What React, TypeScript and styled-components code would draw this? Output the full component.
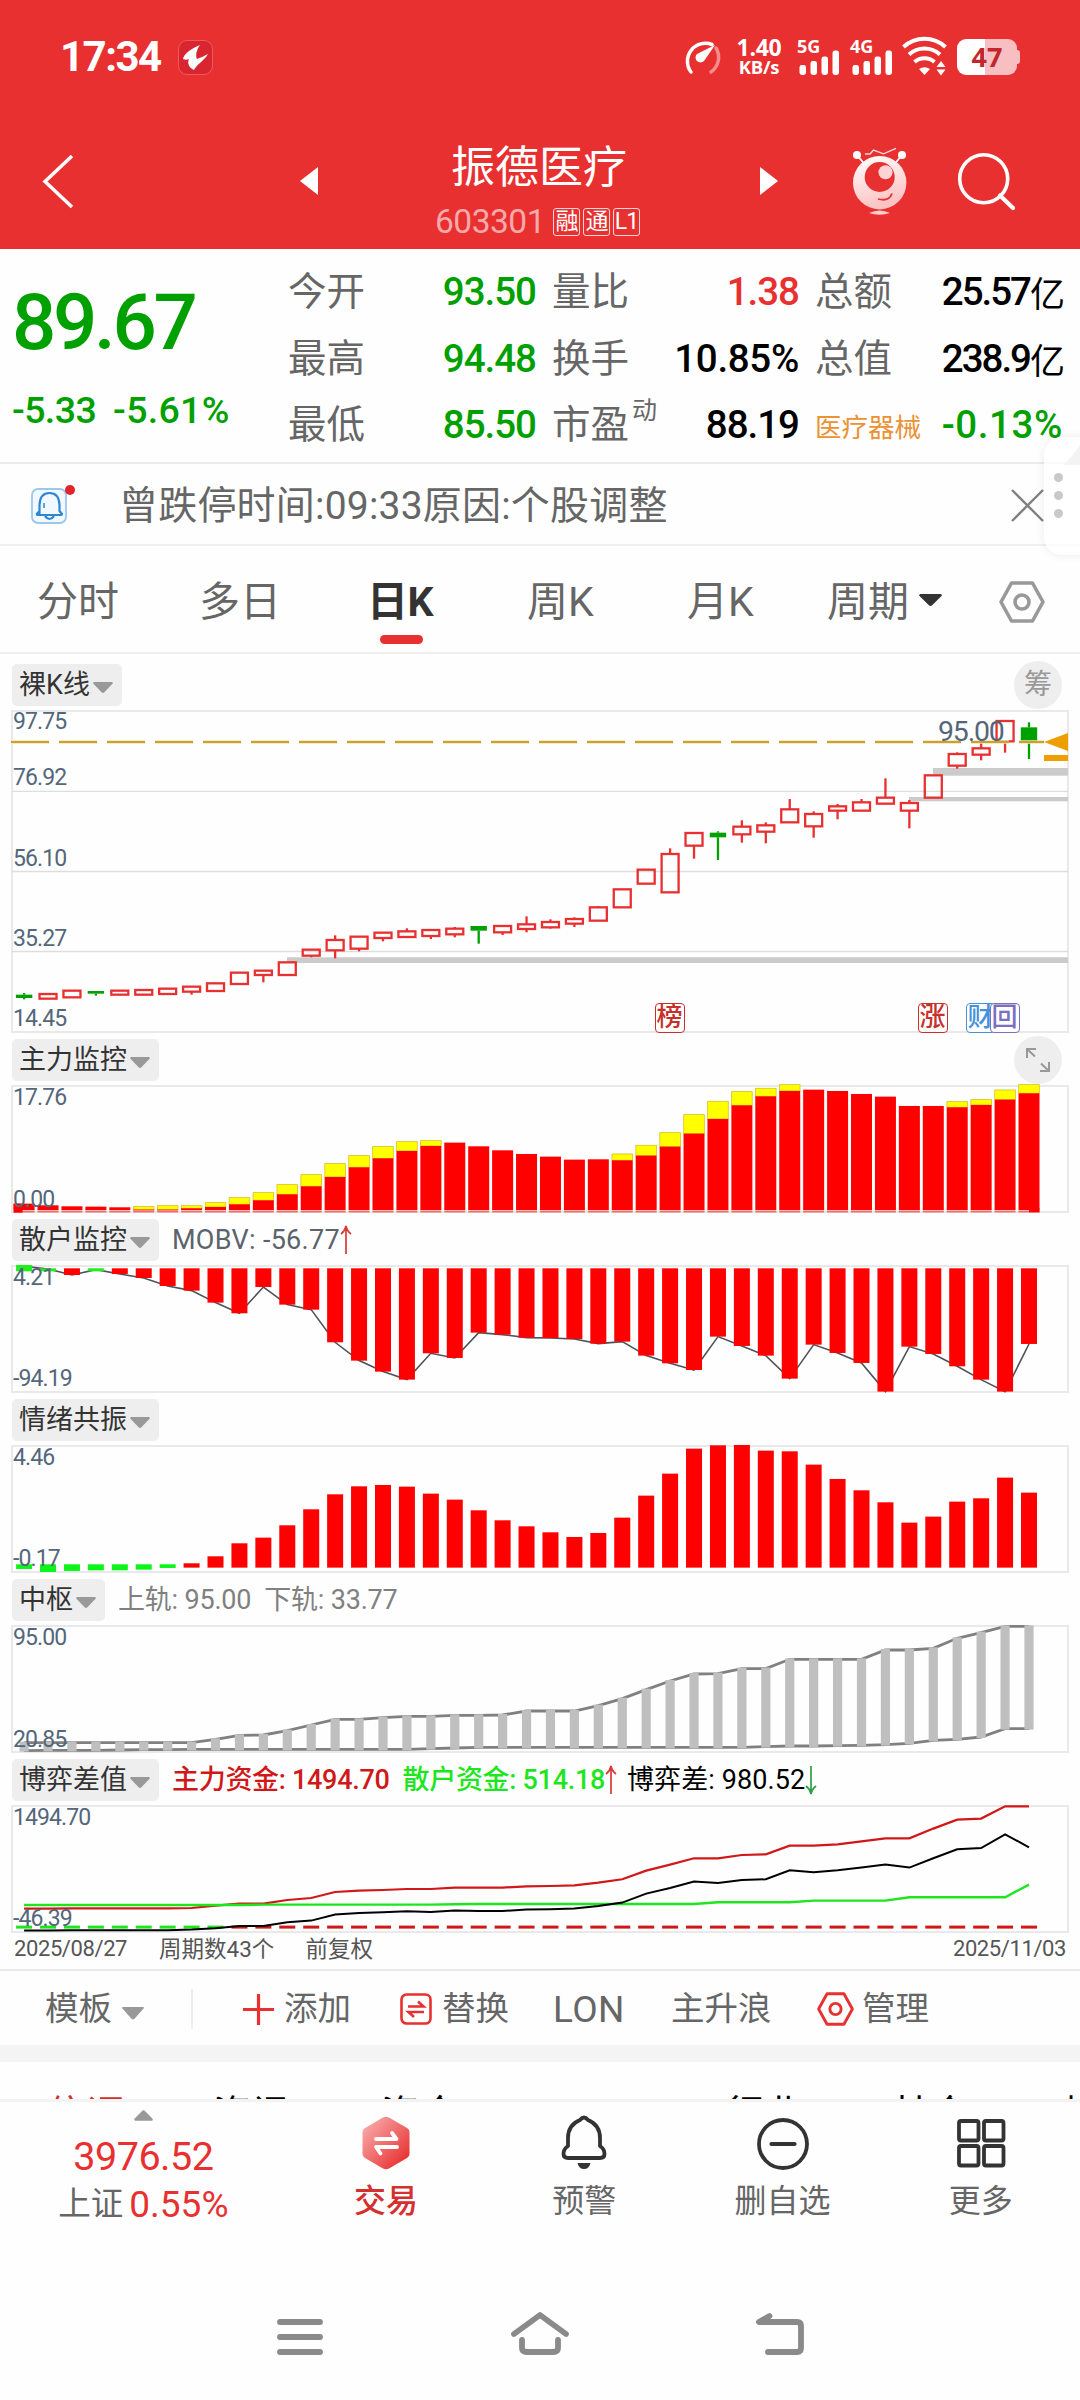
import React from "react";
import styled, { createGlobalStyle } from "styled-components";

const RED = "#e83030";
const GREEN = "#00a000";

const Global = createGlobalStyle`
  body { margin: 0; background: #fefefe; }
  * { box-sizing: border-box; }
  svg { display: block; overflow: visible; flex: none; }
`;

const Screen = styled.div`
  width: 1080px;
  height: 2400px;
  overflow: hidden;
  display: flex;
  flex-direction: column;
  background: #fefefe;
  font-family: Roboto, "Noto Sans CJK SC", sans-serif;
  color: #333;
  position: relative;
`;

const T = styled.span<{ $s: number; $c?: string; $w?: number; $ls?: number }>`
  font-size: ${(p) => p.$s}px;
  line-height: 1;
  white-space: nowrap;
  color: ${(p) => p.$c ?? "inherit"};
  font-weight: ${(p) => p.$w ?? 400};
  letter-spacing: ${(p) => p.$ls ?? 0}px;
`;

/* ---------- header ---------- */

const Header = styled.header`
  height: 249px;
  background: ${RED};
  color: #fff;
  flex: none;
`;

const StatusBar = styled.div`
  height: 114px;
  display: flex;
  align-items: center;
  padding: 0 60px 0 60px;
`;

const AppBadge = styled.div`
  width: 35px;
  height: 35px;
  margin-left: 17px;
  border-radius: 9px;
  background: #d8252f;
  border: 1px solid #ee5a5a;
`;

const Spacer = styled.div`
  flex: 1;
`;

const Speed = styled.div`
  display: flex;
  flex-direction: column;
  align-items: center;
  font: 700 23px/19px "Open Sans", sans-serif;
  width: 46px;
  margin: 0 16px 0 16px;
  letter-spacing: -0.3px;
`;

const SpeedUnit = styled.div`
  font-size: 18.5px;
  line-height: 19px;
`;

const Signal = styled.div`
  width: 42px;
  height: 38px;
  margin-right: 11px;
  position: relative;
`;

const SignalLabel = styled.span`
  position: absolute;
  left: -1px;
  top: -1px;
  font: 700 18px/18px "Open Sans", sans-serif;
`;

const Battery = styled.div`
  width: 60px;
  height: 36px;
  margin-left: 10px;
  border-radius: 9px;
  background: linear-gradient(90deg, #fff 0 28px, #f7bfc1 28px);
  display: flex;
  align-items: center;
  justify-content: center;
  font: 700 27px/36px "Open Sans", sans-serif;
  color: #c1272d;
`;

const BatteryCap = styled.div`
  width: 3px;
  height: 14px;
  border-radius: 0 3px 3px 0;
  background: #f7bfc1;
`;

const TitleRow = styled.div`
  display: flex;
  height: 135px;
`;

const TitleSide = styled.div`
  width: 260px;
  height: 135px;
`;

const TitleMid = styled.div`
  width: 560px;
  display: flex;
  flex-direction: column;
  align-items: center;
  padding-top: 31px;
`;

const NameLine = styled.div`
  width: 560px;
  height: 46px;
  padding: 0 42px 0 40px;
  display: flex;
  align-items: center;
  justify-content: space-between;
`;

const CodeLine = styled.div`
  display: flex;
  gap: 3px;
  margin-top: 14px;
  margin-left: -5px;
  align-items: center;
`;

const Flag = styled.span`
  width: 27px;
  height: 28px;
  border: 1.5px solid #fbd5d5;
  border-radius: 3px;
  font-size: 23px;
  line-height: 25px;
  text-align: center;
  letter-spacing: -1px;
  color: #fff;
`;

/* ---------- quote ---------- */

const Quote = styled.section`
  height: 215px;
  flex: none;
  display: flex;
  border-bottom: 2px solid #ececec;
  padding: 10px 17px 0 12px;
`;

const PriceCol = styled.div`
  width: 276px;
  display: flex;
  flex-direction: column;
  padding-top: 25px;
  color: ${GREEN};
`;

const PriceDelta = styled.div`
  display: flex;
  gap: 17px;
  margin-top: 30px;
`;

const StatGrid = styled.div`
  flex: 1;
  display: grid;
  grid-template-columns: 248px 247px 248px;
  column-gap: 16px;
  grid-template-rows: repeat(3, 66.500px);
`;

const Stat = styled.div`
  display: flex;
  align-items: center;
  justify-content: space-between;
`;

const StatLabel = styled.div`
  font-size: 38.500px;
  line-height: 66px;
  color: #666;
  display: flex;
`;

const Sup = styled.span`
  font-size: 25px;
  line-height: 38px;
  margin-left: 3px;
`;

const StatValue = styled.div<{ $c?: string; $ls?: number }>`
  font-size: 38.500px;
  line-height: 66px;
  font-weight: 500;
  letter-spacing: ${(p) => p.$ls ?? -1}px;
  color: ${(p) => p.$c ?? "#000"};
  white-space: nowrap;
  display: flex;
`;

const Cjk = styled.span`
  font-family: "Noto Sans CJK SC", sans-serif;
  font-weight: 400;
  font-size: 35px;
`;

const Industry = styled.div`
  font-size: 26.5px;
  color: #ea9234;
  letter-spacing: 0;
`;

/* ---------- notice ---------- */

const Notice = styled.section`
  height: 82px;
  flex: none;
  display: flex;
  align-items: center;
  border-bottom: 2px solid #f0f0f0;
  padding: 2px 36px 0 31px;
`;

const NoticeText = styled.div`
  flex: 1;
  margin-left: 45px;
  font-size: 39px;
  letter-spacing: 0.2px;
  line-height: 1;
  padding-top: 2px;
  color: #666;
`;

const Handle = styled.div`
  position: absolute;
  left: 1044px;
  top: 437px;
  width: 50px;
  height: 118px;
  border-radius: 18px;
  background: rgba(255, 255, 255, 0.75);
  box-shadow: 0 0 10px rgba(0, 0, 0, 0.08);
  display: flex;
  flex-direction: column;
  gap: 9px;
  padding: 36px 0 0 10px;
`;

const HandleDot = styled.i`
  width: 9px;
  height: 9px;
  border-radius: 50%;
  background: #c9c9c9;
`;

const HandleCorner = styled.div`
  position: absolute;
  left: 1064px;
  top: 445px;
  width: 16px;
  height: 20px;
  background: #cfcfcf;
  clip-path: polygon(100% 0, 100% 100%, 0 100%, 55% 50%);
`;

/* ---------- period tabs ---------- */

const Periods = styled.nav`
  height: 108px;
  flex: none;
  display: flex;
  border-bottom: 2px solid #eee;
  padding-left: 37px;
  padding-top: 35px;
`;

const Period = styled.div<{ $w: number; $on?: boolean }>`
  width: ${(p) => p.$w}px;
  font-size: 41px;
  line-height: 42px;
  color: ${(p) => (p.$on ? "#333" : "#666")};
  font-weight: ${(p) => (p.$on ? 700 : 400)};
  letter-spacing: ${(p) => (p.$on ? -0.5 : 0)}px;
  display: flex;
  position: relative;
  white-space: nowrap;
  &::after {
    content: "";
    display: ${(p) => (p.$on ? "block" : "none")};
    position: absolute;
    left: 13px;
    top: 54px;
    width: 43px;
    height: 9px;
    border-radius: 5px;
    background: ${RED};
  }
`;

const Caret = styled.i<{ $w: number; $h: number; $c: string }>`
  width: ${(p) => p.$w}px;
  height: ${(p) => p.$h}px;
  background: ${(p) => p.$c};
  clip-path: polygon(4% 0, 96% 0, 100% 12%, 56% 96%, 50% 100%, 44% 96%, 0 12%);
`;

/* ---------- charts ---------- */

const Charts = styled.section`
  flex: none;
  height: 1317px;
  padding-top: 10px;
  border-bottom: 2px solid #eaeaea;
`;

const Panel = styled.div<{ $h: number }>`
  height: ${(p) => p.$h}px;
  position: relative;
`;

const PanelHead = styled.div`
  height: 47px;
  padding: 0 18px 0 12px;
  display: flex;
  align-items: flex-start;
`;

const Chip = styled.div`
  height: 42px;
  padding: 0 9px 0 7px;
  border-radius: 5px;
  background: #eeeeee;
  display: flex;
  align-items: center;
  gap: 3px;
  font-size: 27px;
  line-height: 42px;
  white-space: nowrap;
  color: #333;
`;

const ChipCaret = styled(Caret)`
  margin-top: 5px;
`;

const Readout = styled.div<{ $c: string; $w?: number; $ml?: number; $ls?: number }>`
  display: flex;
  margin-left: ${(p) => p.$ml ?? 13}px;
  font-size: 27px;
  line-height: 43px;
  font-weight: ${(p) => p.$w ?? 400};
  color: ${(p) => p.$c};
  letter-spacing: ${(p) => p.$ls ?? -0.2}px;
  white-space: pre;
`;

const Round = styled.div`
  width: 48px;
  height: 48px;
  margin-top: -3px;
  border-radius: 50%;
  background: #eeeeee;
  color: #999;
  font-size: 28px;
  line-height: 46px;
  text-align: center;
  display: flex;
  align-items: center;
  justify-content: center;
`;

const AxisLabel = styled.span<{ $y: number }>`
  position: absolute;
  left: 13px;
  top: ${(p) => p.$y}px;
  font-size: 23px;
  line-height: 24px;
  letter-spacing: -0.9px;
  color: #54677a;
`;

const PriceMark = styled.span`
  position: absolute;
  left: 938px;
  top: 53px;
  font-size: 28.5px;
  line-height: 30px;
  letter-spacing: -1.2px;
  color: #54677a;
`;

const EventTag = styled.span<{ $x: number; $c: string }>`
  position: absolute;
  left: ${(p) => p.$x}px;
  top: 339px;
  width: 30px;
  height: 30px;
  border: 1.5px solid ${(p) => p.$c};
  border-radius: 4px;
  background: #fefefe;
  color: ${(p) => p.$c};
  font-size: 26px;
  line-height: 26px;
  font-weight: 500;
  text-indent: 0.5px;
  overflow: hidden;
`;

const DateRow = styled.div`
  height: 38px;
  margin-top: -7px;
  display: flex;
  padding: 0 14px 0 14px;
  font-size: 22px;
  line-height: 34px;
  color: #555;
  letter-spacing: -0.4px;
`;

/* ---------- toolbar and bottom ---------- */

const Toolbar = styled.section`
  height: 74px;
  flex: none;
  display: flex;
  align-items: center;
  padding-left: 45px;
  padding-top: 2px;
  color: #666;
`;

const Tool = styled.div<{ $w: number; $gap?: number }>`
  width: ${(p) => p.$w}px;
  display: flex;
  align-items: center;
  gap: ${(p) => p.$gap ?? 10}px;
  font-size: 33.5px;
  line-height: 42px;
  white-space: nowrap;
`;

const Divider = styled.div`
  width: 2px;
  height: 40px;
  margin-right: 50px;
  background: #eee;
`;

const Band = styled.div`
  height: 17px;
  flex: none;
  background: #f4f4f4;
`;

const InfoTabs = styled.nav`
  height: 37px;
  flex: none;
  padding: 33px 0 0 47px;
  overflow: hidden;
  display: flex;
  color: #000;
`;

const InfoTab = styled.div<{ $w: number; $c?: string }>`
  width: ${(p) => p.$w}px;
  flex: none;
  font-size: 39px;
  line-height: 40px;
  white-space: nowrap;
  color: ${(p) => p.$c ?? "#000"};
`;

const BottomBar = styled.nav`
  height: 150px;
  flex: none;
  border-top: 3px solid #f3f3f3;
  display: flex;
`;

const IndexBox = styled.div`
  width: 287px;
  display: flex;
  flex-direction: column;
  align-items: center;
  padding-top: 8px;
`;

const IndexLine = styled.div`
  display: flex;
  gap: 6px;
  align-items: center;
  margin-top: 9px;
`;

const NavItem = styled.div<{ $c?: string; $on?: boolean }>`
  width: 198.5px;
  display: flex;
  flex-direction: column;
  align-items: center;
  padding-top: 14px;
  gap: 14px;
  font-size: 32px;
  line-height: 34px;
  font-weight: ${(p) => (p.$on ? 500 : 400)};
  color: ${(p) => p.$c ?? "#666"};
`;

const SystemNav = styled.div`
  height: 148px;
  flex: none;
  display: flex;
  padding: 61px 0 0 277px;
`;

/* ---------- data: heights in thirds of a pixel below each panel's header ---------- */

const X0 = 24.1;
const STEP = 23.926;
const cx = (i: number) => X0 + i * STEP;
const Y = (v: number) => v / 3;

type Candle = [number, number, number, number, number?];
const CANDLES: Candle[] = [
  [879, 884, 894, 898, 1], [880, 882, 896, 897], [870, 872, 892, 892], [873, 873, 881, 887, 1],
  [870, 872, 884, 886], [869, 870, 884, 886], [865, 866, 882, 882], [858, 860, 875, 884],
  [848, 850, 873, 873], [818, 818, 852, 852], [811, 812, 825, 847], [787, 787, 825, 825],
  [748, 749, 767, 772], [706, 720, 751, 775], [708, 710, 746, 754], [697, 698, 714, 724],
  [685, 694, 711, 711], [690, 690, 708, 717], [681, 686, 703, 712], [678, 678, 692, 731, 1],
  [677, 678, 697, 705], [649, 673, 687, 697], [658, 666, 682, 686], [652, 657, 671, 681],
  [618, 622, 662, 662], [568, 568, 622, 622], [508, 509, 551, 551], [445, 462, 577, 577],
  [397, 399, 437, 476], [394, 398, 412, 480, 1], [361, 380, 403, 428], [367, 376, 395, 430],
  [297, 328, 367, 367], [334, 342, 379, 413], [312, 319, 332, 358], [297, 307, 332, 332],
  [235, 293, 311, 311], [300, 309, 332, 385], [226, 226, 293, 293], [157, 162, 197, 206],
  [127, 145, 164, 181], [63, 63, 124, 158], [67, 82, 125, 177, 1],
];

const MAIN_RED = [520, 525, 528, 529, 531, 538, 538, 534, 530, 522, 510, 492, 468, 440, 411, 384, 362, 347, 337, 348, 360, 371, 379, 388, 387, 390, 376, 349, 310, 266, 225, 198, 182, 178, 182, 191, 199, 227, 227, 231, 224, 208, 189];
const MAIN_YELLOW: Record<number, number> = { 5: 529, 6: 526, 7: 526, 8: 517, 9: 502, 10: 487, 11: 463, 12: 433, 13: 400, 14: 376, 15: 349, 16: 334, 17: 331, 25: 371, 26: 345, 27: 307, 28: 253, 29: 213, 30: 184, 31: 174, 32: 163, 39: 214, 40: 208, 41: 179, 42: 163 };

const MOBV = [708, 716, 734, 718, 731, 743, 767, 781, 817, 849, 770, 823, 838, 936, 991, 1024, 1048, 969, 983, 907, 913, 922, 923, 926, 940, 934, 976, 999, 1019, 919, 947, 976, 1045, 943, 968, 998, 1084, 949, 971, 1008, 1048, 1084, 941];

const MOOD = [536, 545, 542, 540, 540, 538, 533, 519, 498, 459, 442, 405, 357, 312, 288, 284, 289, 310, 328, 360, 390, 408, 426, 440, 428, 382, 316, 250, 175, 165, 164, 181, 183, 223, 266, 300, 336, 397, 379, 334, 324, 262, 307];

const UPPER = [1057, 1057, 1057, 1057, 1057, 1057, 1057, 1057, 1047, 1035, 1034, 1021, 1004, 987, 987, 982, 978, 978, 975, 975, 974, 962, 962, 962, 946, 925, 898, 872, 851, 850, 835, 835, 807, 807, 807, 807, 779, 779, 774, 744, 727, 708, 708];
const LOWER = [1081, 1080, 1080, 1080, 1079, 1078, 1078, 1077, 1077, 1077, 1077, 1077, 1077, 1077, 1077, 1077, 1077, 1075, 1073, 1071, 1071, 1071, 1071, 1071, 1071, 1071, 1071, 1071, 1071, 1071, 1071, 1069, 1067, 1067, 1066, 1065, 1063, 1059, 1050, 1047, 1040, 1015, 1015];

const FUND_RED = [475, 475, 474, 474, 474, 474, 474, 473, 466, 460, 460, 449, 443, 425, 421, 419, 416, 416, 412, 412, 412, 408, 407, 405, 397, 387, 361, 343, 324, 324, 314, 312, 286, 286, 282, 273, 264, 264, 235, 208, 205, 168, 168];
const FUND_GREEN = [464, 464, 464, 464, 464, 464, 464, 464, 464, 464, 463, 463, 463, 463, 463, 463, 463, 463, 462, 461, 461, 461, 461, 461, 461, 461, 461, 461, 461, 456, 456, 456, 456, 451, 451, 451, 451, 441, 441, 441, 441, 441, 403];
const FUND_BLACK = [541, 541, 540, 540, 540, 540, 540, 538, 534, 527, 527, 516, 511, 493, 488, 486, 483, 485, 481, 482, 482, 478, 477, 475, 467, 457, 430, 413, 394, 398, 389, 387, 360, 366, 360, 352, 343, 352, 324, 297, 293, 252, 291];

const line = (vals: number[]) => vals.map((v, i) => `${cx(i).toFixed(1)},${Y(v).toFixed(1)}`).join(" ");

const Frame = ({ top, height = 126 }: { top: number; height?: number }) => (
  <rect x={12} y={top} width={1056} height={height} fill="none" stroke="#e9e9e9" strokeWidth={2} />
);

const KChart = () => (
  <svg width="1080" height="321" viewBox="0 11 1080 321">
    <Frame top={11} height={321} />
    {[91.3, 171.5, 251.5].map((y) => (
      <line key={y} x1={12} x2={1068} y1={y} y2={y} stroke="#dedede" strokeWidth={1.3} />
    ))}
    <rect x={287} y={257.3} width={781} height={5.7} fill="#cbcbcb" />
    <rect x={933} y={68} width={135} height={7.7} fill="#cbcbcb" />
    <rect x={909} y={97} width={159} height={4.3} fill="#cbcbcb" />
    {CANDLES.map(([h, t, b, l, g], i) => {
      const x = cx(i);
      const c = g ? GREEN : RED;
      return (
        <g key={i} stroke={c} strokeWidth={2.3} fill="none">
          {h < t && <line x1={x} x2={x} y1={Y(h)} y2={Y(t)} />}
          {l > b && <line x1={x} x2={x} y1={Y(b)} y2={Y(l)} />}
          {g ? (
            <rect x={x - 8.2} y={Y(t)} width={16.4} height={Y(b - t)} fill={c} stroke="none" />
          ) : (
            <rect x={x - 8.5} y={Y(t)} width={17} height={Y(b - t)} />
          )}
        </g>
      );
    })}
    <line x1={11} x2={1044} y1={42} y2={42} stroke="#f7e3a0" strokeWidth={3.4} strokeDasharray="38 10" />
    <line x1={11} x2={1044} y1={42} y2={42} stroke="#c4a040" strokeWidth={1.8} strokeDasharray="38 10" />
    <path d="M1044 42 L1068 33 V51 Z" fill="#ed9f00" />
    <rect x={1044} y={55} width={24} height={6} fill="#ed9f00" />
  </svg>
);

const MainForce = () => (
  <svg width="1080" height="126" viewBox="0 55.7 1080 126">
    <Frame top={55.7} />
    {MAIN_RED.map((v, i) => (
      <g key={i}>
        {MAIN_YELLOW[i] && (
          <rect x={cx(i) - 10.3} y={Y(MAIN_YELLOW[i])} width={20.6} height={Y(v - MAIN_YELLOW[i])} fill="#ff0" stroke="#d8c020" strokeWidth={0.8} />
        )}
        <rect x={cx(i) - 10.5} y={Y(v)} width={21} height={Y(Math.max(537 - v, 0)) + 0.8} fill="#f00" />
        <rect x={cx(i) - 10.5} y={180.4} width={21} height={1.8} fill="#f36c6c" />
      </g>
    ))}
    <rect x={13.6} y={Y(520)} width={9} height={9} fill="#f00" />
    <rect x={1029} y={178} width={10.5} height={4} fill="#f00" />
  </svg>
);

const Retail = () => (
  <svg width="1080" height="126" viewBox="0 235.7 1080 126">
    <Frame top={235.7} />
    <polyline points={line(MOBV)} fill="none" stroke="#4d5358" strokeWidth={1.6} />
    {MOBV.map((v, i) => {
      const small = i === 0 || i === 1 || i === 3;
      const top = i === 0 ? 704 : 714;
      return (
        <rect key={i} x={cx(i) - 8} y={Y(top)} width={16} height={Y((small ? 723 : v) - top)} fill={small ? "#1ef01e" : "#f00"} />
      );
    })}
  </svg>
);

const Mood = () => (
  <svg width="1080" height="126" viewBox="0 55.7 1080 126">
    <Frame top={55.7} />
    {MOOD.map((v, i) => {
      const neg = i < 7;
      return (
        <rect key={i} x={cx(i) - 8} y={Y(neg ? 522 : v)} width={16} height={Y(neg ? v - 522 : 532 - v)} fill={neg ? "#0cf51a" : "#f00"} />
      );
    })}
  </svg>
);

const Pivot = () => (
  <svg width="1080" height="126" viewBox="0 235.7 1080 126">
    <Frame top={235.7} />
    <polyline points={line(UPPER)} fill="none" stroke="#808080" strokeWidth={2.8} />
    <polyline points={line(LOWER)} fill="none" stroke="#808080" strokeWidth={2.8} />
    {UPPER.map((v, i) => (
      <rect key={i} x={cx(i) - 4.6} y={Y(v) - 1} width={9.2} height={Y(LOWER[i] - v) + 2} fill="#bfbfbf" />
    ))}
  </svg>
);

const Funds = () => (
  <svg width="1080" height="126" viewBox="0 55.7 1080 126">
    <Frame top={55.7} />
    {FUND_RED.map((_, i) => (
      <rect key={i} x={cx(i) - 8} y={175.3} width={16} height={3} fill={i < 9 ? "#1ee61e" : "#d01818"} />
    ))}
    <polyline points={line(FUND_RED)} fill="none" stroke="#d01818" strokeWidth={2.2} />
    <polyline points={line(FUND_GREEN)} fill="none" stroke="#1ee61e" strokeWidth={2.4} />
    <polyline points={line(FUND_BLACK)} fill="none" stroke="#000" strokeWidth={2} />
  </svg>
);

/* ---------- icons ---------- */

const Arrow = ({ down, color }: { down?: boolean; color: string }) => (
  <svg width="12" height="30" viewBox="0 0 12 30" style={{ marginTop: 6, transform: down ? "scaleY(-1)" : undefined }}>
    <path d="M6 1 V29 M1 9 Q5 6 6 1 Q7 6 11 9" fill="none" stroke={color} strokeWidth="1.7" />
  </svg>
);

const Bars = ({ label }: { label: string }) => (
  <Signal>
    <SignalLabel>{label}</SignalLabel>
    <svg width="42" height="38" viewBox="0 0 42 38">
      {[27, 23, 18.5, 12.5].map((y, i) => (
        <rect key={i} x={1.5 + i * 11} y={y} width="6.5" height={37 - y} rx="2.4" fill="#fff" />
      ))}
    </svg>
  </Signal>
);

const Hexagon = ({ w, h, color, r }: { w: number; h: number; color: string; r: number }) => (
  <svg width={w} height={h} viewBox="0 0 46 42">
    <path d="M12.5 2 H33.5 L44 21 L33.5 40 H12.5 L2 21 Z" fill="none" stroke={color} strokeWidth="3.6" strokeLinejoin="round" />
    <circle cx="23" cy="21" r={r} fill="none" stroke={color} strokeWidth="3.6" />
  </svg>
);

const Head = ({ name, children }: { name: string; children?: React.ReactNode }) => (
  <PanelHead>
    <Chip>
      {name}
      <ChipCaret $w={20} $h={11} $c="#999" />
    </Chip>
    {children}
  </PanelHead>
);

export default function App() {
  return (
    <Screen>
      <Global />
      <Header>
        <StatusBar>
          <T $s={42} $w={700} $ls={-1.5}>17:34</T>
          <AppBadge>
            <svg width="33" height="33" viewBox="0 0 33 33">
              <path d="M21 4 C10 9 5 13 4 18 C6 19 8 19 10 18 C8 22 10 27 15 29 C17 24 25 20 29 13 C25 15 21 17 18 18 C16 14 18 8 21 4 Z" fill="#fff" />
            </svg>
          </AppBadge>
          <Spacer />
          <svg width="40" height="38" viewBox="682 39 40 38">
            <path d="M693 73 A18 18 0 0 1 714 45.500" fill="none" stroke="#fff" strokeWidth="3.500" strokeLinecap="round" />
            <path d="M718 49 A18 18 0 0 1 713 73" fill="none" stroke="#f58c8c" strokeWidth="3.500" strokeLinecap="round" />
            <path d="M717 46 L706 62 A4.800 4.800 0 1 1 699 55 Z" fill="#fff" />
          </svg>
          <Speed>
            1.40
            <SpeedUnit>KB/s</SpeedUnit>
          </Speed>
          <Bars label="5G" />
          <Bars label="4G" />
          <svg width="45" height="38" viewBox="903 38 45 38" style={{ marginLeft: -2 }}>
            <g fill="none" stroke="#fff" strokeWidth="4">
              <path d="M904.500 47 A31 31 0 0 1 946.500 47" />
              <path d="M910 54.500 A23 23 0 0 1 941 54.500" />
              <path d="M915.500 62 A15 15 0 0 1 935.500 62" />
            </g>
            <path d="M920 69 Q925.500 65.500 931 69 L925.500 75 Z" fill="#fff" />
            <path d="M937.500 67 L942 61 L946.500 67 Z M937.500 69.500 L942 75.500 L946.500 69.500 Z" fill="#fff" />
          </svg>
          <Battery>47</Battery>
          <BatteryCap />
        </StatusBar>
        <TitleRow>
          <TitleSide>
            <svg width="260" height="135" viewBox="0 114 260 135">
              <path d="M72 156 L45 181.500 L72 207" fill="none" stroke="#fff" strokeWidth="3.500" />
            </svg>
          </TitleSide>
          <TitleMid>
            <NameLine>
              <svg width="18" height="28" viewBox="0 0 18 28" style={{ marginTop: 26 }}>
                <path d="M18 0 V28 L0 14 Z" fill="#fff" />
              </svg>
              <T $s={44}>振德医疗</T>
              <svg width="18" height="28" viewBox="0 0 18 28" style={{ marginTop: 26 }}>
                <path d="M0 0 V28 L18 14 Z" fill="#fff" />
              </svg>
            </NameLine>
            <CodeLine>
              <T $s={33.5} $c="#f7a9a9" $ls={-0.5} style={{ marginRight: 5 }}>603301</T>
              <Flag>融</Flag>
              <Flag>通</Flag>
              <Flag>L1</Flag>
            </CodeLine>
          </TitleMid>
          <TitleSide>
            <svg width="260" height="135" viewBox="820 114 260 135">
              <defs>
                <linearGradient id="mascot" x1="0" y1="0" x2="0.3" y2="1">
                  <stop offset="0" stopColor="#fff" />
                  <stop offset="1" stopColor="#fdc3c3" />
                </linearGradient>
              </defs>
              <path d="M857 155 L866 166 M902 155 L893 166" stroke="#fff" strokeWidth="1.800" />
              <circle cx="857" cy="155" r="4" fill="#fff" />
              <circle cx="902" cy="155" r="4" fill="#fff" />
              <path d="M865 154 H870 L873.500 150 L883.500 153.800 L896 148.300" fill="none" stroke="#fbdada" strokeWidth="1.400" />
              <circle cx="879.700" cy="182.700" r="26.700" fill="url(#mascot)" />
              <circle cx="879.700" cy="177" r="15" fill={RED} />
              <circle cx="885.500" cy="172.300" r="7" fill="#fdd4d4" />
              <path d="M878 199 Q889 202 892 193.500" fill="none" stroke={RED} strokeWidth="1.800" />
              <path d="M869 213 Q879.500 208 890 213 Q879.500 216.500 869 213 Z" fill="#fcc" />
              <circle cx="983.700" cy="178.700" r="24" fill="none" stroke="#fff" strokeWidth="3.600" />
              <path d="M1000 195.500 L1013 208" stroke="#fff" strokeWidth="4.200" strokeLinecap="round" />
            </svg>
          </TitleSide>
        </TitleRow>
      </Header>

      <Quote>
        <PriceCol>
          <T $s={78} $w={500} $ls={-3.3}>89.67</T>
          <PriceDelta>
            <T $s={37.5} $w={500} $ls={-0.6}>-5.33</T>
            <T $s={37.5} $w={500} $ls={0.3}>-5.61%</T>
          </PriceDelta>
        </PriceCol>
        <StatGrid>
          <Stat><StatLabel>今开</StatLabel><StatValue $c={GREEN}>93.50</StatValue></Stat>
          <Stat><StatLabel>量比</StatLabel><StatValue $c={RED}>1.38</StatValue></Stat>
          <Stat><StatLabel>总额</StatLabel><StatValue $ls={-2}>25.57<Cjk>亿</Cjk></StatValue></Stat>
          <Stat><StatLabel>最高</StatLabel><StatValue $c={GREEN}>94.48</StatValue></Stat>
          <Stat><StatLabel>换手</StatLabel><StatValue $ls={-0.3}>10.85%</StatValue></Stat>
          <Stat><StatLabel>总值</StatLabel><StatValue $ls={-2}>238.9<Cjk>亿</Cjk></StatValue></Stat>
          <Stat><StatLabel>最低</StatLabel><StatValue $c={GREEN}>85.50</StatValue></Stat>
          <Stat><StatLabel>市盈<Sup>动</Sup></StatLabel><StatValue>88.19</StatValue></Stat>
          <Stat><Industry>医疗器械</Industry><StatValue $c={GREEN} $ls={0.6}>-0.13%</StatValue></Stat>
        </StatGrid>
      </Quote>

      <Notice>
        <svg width="43" height="44" viewBox="31 482 43 44">
          <rect x="32" y="488" width="34" height="34" rx="6" fill="#f1f8fe" stroke="#9cc8f0" strokeWidth="1.800" />
          <path d="M39.500 514 V504 Q40 492 49.500 492 Q59 492 59.500 504 V510 L62 513 Q62 514 61 514 H38 Q36.500 514 37 512.500 L39.500 510 M45 515 Q49.500 521 54 515" fill="none" stroke="#2e86d0" strokeWidth="2.200" />
          <path d="M44 502 V507" stroke="#2e86d0" strokeWidth="1.500" />
          <circle cx="70" cy="489" r="5" fill="#e3222b" />
        </svg>
        <NoticeText>曾跌停时间:09:33原因:个股调整</NoticeText>
        <svg width="33" height="33" viewBox="0 0 33 33">
          <path d="M1 1 L32 32 M32 1 L1 32" stroke="#808080" strokeWidth="2.400" />
        </svg>
      </Notice>

      <Periods>
        <Period $w={162}>分时</Period>
        <Period $w={168}>多日</Period>
        <Period $w={160} $on>日K</Period>
        <Period $w={160}>周K</Period>
        <Period $w={140}>月K</Period>
        <Period $w={172}>
          周期
          <Caret $w={23} $h={12} $c="#333" style={{ margin: "13px 0 0 10px" }} />
        </Period>
        <Hexagon w={46} h={42} color="#999" r={7} />
      </Periods>

      <Charts>
        <Panel $h={375}>
          <Head name="裸K线">
            <Spacer />
            <Round>筹</Round>
          </Head>
          <KChart />
          <AxisLabel $y={46}>97.75</AxisLabel>
          <AxisLabel $y={102}>76.92</AxisLabel>
          <AxisLabel $y={183}>56.10</AxisLabel>
          <AxisLabel $y={263}>35.27</AxisLabel>
          <AxisLabel $y={343}>14.45</AxisLabel>
          <PriceMark>95.00</PriceMark>
          <EventTag $x={655} $c="#c8302c">榜</EventTag>
          <EventTag $x={918} $c="#c8302c">涨</EventTag>
          <EventTag $x={966} $c="#4591dc">财</EventTag>
          <EventTag $x={990} $c="#7a6fc0">回</EventTag>
        </Panel>

        <Panel $h={180}>
          <Head name="主力监控">
            <Spacer />
            <Round>
              <svg width="26" height="26" viewBox="0 0 26 26">
                <path d="M2 11 V2 H11 M2 2 L10 9.500 M24 15 V24 H15 M24 24 L16 16.500" fill="none" stroke="#999" strokeWidth="2" />
              </svg>
            </Round>
          </Head>
          <MainForce />
          <AxisLabel $y={47}>17.76</AxisLabel>
          <AxisLabel $y={149}>0.00</AxisLabel>
        </Panel>

        <Panel $h={180}>
          <Head name="散户监控">
            <Readout $c="#5b636c" $ls={0.3}>MOBV: -56.77<Arrow color="#d93a3a" /></Readout>
          </Head>
          <Retail />
          <AxisLabel $y={47}>4.21</AxisLabel>
          <AxisLabel $y={148}>-94.19</AxisLabel>
        </Panel>

        <Panel $h={180}>
          <Head name="情绪共振" />
          <Mood />
          <AxisLabel $y={47}>4.46</AxisLabel>
          <AxisLabel $y={148}>-0.17</AxisLabel>
        </Panel>

        <Panel $h={180}>
          <Head name="中枢">
            <Readout $c="#808080">上轨: 95.00</Readout>
            <Readout $c="#808080">下轨: 33.77</Readout>
          </Head>
          <Pivot />
          <AxisLabel $y={47}>95.00</AxisLabel>
          <AxisLabel $y={149}>20.85</AxisLabel>
        </Panel>

        <Panel $h={180}>
          <Head name="博弈差值">
            <Readout $c="#d01818" $w={500} $ls={-0.3}>主力资金: 1494.70</Readout>
            <Readout $c="#1ee61e" $w={500} $ls={-0.3}>散户资金: 514.18<Arrow color="#d93a3a" /></Readout>
            <Readout $c="#000" $ml={10} $ls={0.1}>博弈差: 980.52<Arrow down color="#2e9e48" /></Readout>
          </Head>
          <Funds />
          <AxisLabel $y={47}>1494.70</AxisLabel>
          <AxisLabel $y={148}>-46.39</AxisLabel>
        </Panel>
        <DateRow>
          <span>2025/08/27</span>
          <T $s={22.5} style={{ lineHeight: "34px", marginLeft: 32 }}>周期数43个</T>
          <T $s={22.5} style={{ lineHeight: "34px", marginLeft: 31 }}>前复权</T>
          <Spacer />
          <span>2025/11/03</span>
        </DateRow>
      </Charts>

      <Toolbar>
        <Tool $w={146}>模板<Caret $w={22} $h={13} $c="#999" style={{ marginTop: 8 }} /></Tool>
        <Divider />
        <Tool $w={157} $gap={10}>
          <svg width="31" height="31" viewBox="0 0 31 31">
            <path d="M15.500 0 V31 M0 15.500 H31" stroke={RED} strokeWidth="3.200" />
          </svg>
          添加
        </Tool>
        <Tool $w={153} $gap={10}>
          <svg width="32" height="32" viewBox="0 0 32 32">
            <rect x="1.500" y="1.500" width="29" height="29" rx="5" fill="none" stroke={RED} strokeWidth="2.600" />
            <path d="M8 13.500 H23.500 L18 8.500 M24 19 H8.500 L14 24" fill="none" stroke={RED} strokeWidth="2.600" />
          </svg>
          替换
        </Tool>
        <Tool $w={118}><T $s={37} $ls={0.4}>LON</T></Tool>
        <Tool $w={146}>主升浪</Tool>
        <Tool $w={140} $gap={8}>
          <Hexagon w={37} h={34} color={RED} r={7} />
          管理
        </Tool>
      </Toolbar>
      <Band />
      <InfoTabs>
        <InfoTab $w={166} $c="#d0302c">信评</InfoTab>
        <InfoTab $w={168}>资讯</InfoTab>
        <InfoTab $w={177}>资金</InfoTab>
        <InfoTab $w={167}>F10</InfoTab>
        <InfoTab $w={166}>行业</InfoTab>
        <InfoTab $w={171}>基金</InfoTab>
        <InfoTab $w={80}>板块</InfoTab>
      </InfoTabs>

      <BottomBar>
        <IndexBox>
          <svg width="19" height="11" viewBox="0 0 19 11">
            <path d="M9.500 1.500 L17.500 9.500 H1.500 Z" fill="#999" stroke="#999" strokeWidth="2.500" strokeLinejoin="round" />
          </svg>
          <T $s={39.5} $c={RED} $ls={-0.5} style={{ marginTop: 16 }}>3976.52</T>
          <IndexLine>
            <T $s={32.5} $c="#666">上证</T>
            <T $s={37} $c={RED} $ls={0}>0.55%</T>
          </IndexLine>
        </IndexBox>
        <NavItem $c="#d43030" $on>
          <svg width="48" height="54" viewBox="0 0 48 54">
            <defs>
              <linearGradient id="trade" x1="0" y1="0" x2="1" y2="1">
                <stop offset="0.1" stopColor="#f8a8a8" />
                <stop offset="0.9" stopColor="#e83030" />
              </linearGradient>
            </defs>
            <path d="M21 1.500 Q24 0 27 1.500 L45 12 Q47.500 13.500 47.500 16 V38 Q47.500 40.500 45 42 L27 52.500 Q24 54 21 52.500 L3 42 Q0.500 40.500 0.500 38 V16 Q0.500 13.500 3 12 Z" fill="url(#trade)" />
            <path d="M14 23 H34.500 L30 17 M35 31 H14 L18.500 37.500" fill="none" stroke="#fff" strokeWidth="3.800" strokeLinecap="round" strokeLinejoin="round" />
          </svg>
          交易
        </NavItem>
        <NavItem>
          <svg width="46" height="54" viewBox="0 0 46 54">
            <path d="M19 4 Q23 -1 27 4 Q39 9 39 22 V30 Q43.500 33 43.500 38 Q43.500 42 39 42 H7 Q2.500 42 2.500 38 Q2.500 33 7 30 V22 Q7 9 19 4 Z" fill="none" stroke="#333" strokeWidth="3.800" strokeLinejoin="round" />
            <path d="M16.500 47 H29.500 Q28 53 23 53 Q18 53 16.500 47 Z" fill="#333" />
          </svg>
          预警
        </NavItem>
        <NavItem>
          <svg width="54" height="54" viewBox="0 0 54 54">
            <circle cx="27" cy="28" r="24" fill="none" stroke="#333" strokeWidth="3.800" />
            <path d="M15.500 28 H38.500" stroke="#333" strokeWidth="4.200" strokeLinecap="round" />
          </svg>
          删自选
        </NavItem>
        <NavItem>
          <svg width="48" height="54" viewBox="0 0 48 54">
            {[[2, 5], [27, 5], [2, 30], [27, 30]].map(([x, y]) => (
              <rect key={`${x}-${y}`} x={x} y={y} width="19.500" height="19.500" rx="2" fill="none" stroke="#333" strokeWidth="3.800" />
            ))}
          </svg>
          更多
        </NavItem>
      </BottomBar>

      <SystemNav>
        <svg width="540" height="48" viewBox="277 2310 540 48">
          <g fill="none" stroke="#8a8a8a" strokeWidth="5.800" strokeLinecap="round" strokeLinejoin="round">
            <path d="M280 2322 H320 M280 2337 H320 M280 2352 H320" />
            <path d="M514 2334 L540 2315 L566 2334" />
            <path d="M522 2340 V2348 Q522 2352 527 2352 H553 Q558 2352 558 2348 V2340" />
            <path d="M769.500 2316 L759 2322 H797 Q801 2322 801 2326 V2348 Q801 2352 797 2352 H768" />
          </g>
        </svg>
      </SystemNav>
      <HandleCorner />
      <Handle>
        <HandleDot />
        <HandleDot />
        <HandleDot />
      </Handle>
    </Screen>
  );
}
